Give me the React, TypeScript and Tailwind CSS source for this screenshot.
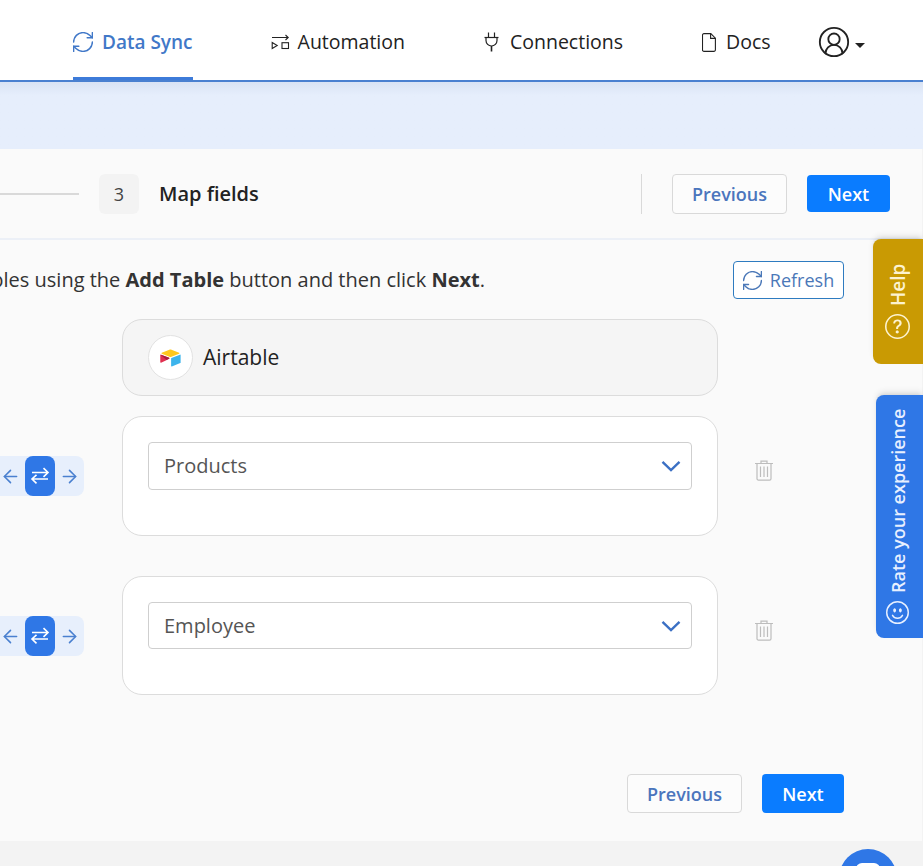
import React from "react";
import { BsQuestionCircle, BsEmojiSmile } from "react-icons/bs";
import { ArrowLeft, ArrowRight, CircleUserRound } from "lucide-react";

const font = { fontFamily: '"Open Sans", sans-serif' };

const SyncIcon = ({ size, className }: { size: number; className: string }) => (
  <svg width={size} height={size} viewBox="2.4 2.4 19.2 19.2" fill="none" stroke="currentColor" strokeWidth="1.4" strokeLinecap="round" strokeLinejoin="round" className={className}>
    <path d="M3 12a9 9 0 0 1 9-9 9.75 9.75 0 0 1 6.74 2.74L21 8" />
    <path d="M21 3v5h-5" />
    <path d="M21 12a9 9 0 0 1-9 9 9.75 9.75 0 0 1-6.74-2.74L3 16" />
    <path d="M8 16H3v5" />
  </svg>
);

const AutomationIcon = () => (
  <svg width="19" height="17" viewBox="0 0 19 17" fill="none" stroke="#222" strokeWidth="1.1" className="mr-2 -ml-px">
    <path d="M1 3.5h16M14.5 1l2.7 2.5L14.5 6" />
    <path d="M1.2 8.5v6l5-3z" />
    <rect x="11" y="8.7" width="6.5" height="5.8" />
  </svg>
);

const PlugIcon = () => (
  <svg width="15" height="20" viewBox="0 0 15 20" fill="none" stroke="#222" strokeWidth="1.2" className="mr-[11px]">
    <path d="M4.5 0.5v5M10.5 0.5v5" />
    <path d="M0.5 5.5h14" />
    <path d="M2 5.5v3a5.5 5.5 0 0 0 11 0v-3" />
    <path d="M7.5 14v5.5" strokeWidth="1.6" />
  </svg>
);

const DocIcon = () => (
  <svg width="14" height="19" viewBox="0 0 14 19" fill="none" stroke="#222" strokeWidth="1.1" className="mr-[10px]">
    <path d="M2 0.6h6.8l4.6 4.6V16.6a1.6 1.6 0 0 1-1.6 1.8H2a1.5 1.5 0 0 1-1.5-1.6V2.2A1.5 1.5 0 0 1 2 0.6z" />
    <path d="M8.6 0.8v4.6h4.6" />
  </svg>
);

const SwapIcon = () => (
  <svg width="20" height="18" viewBox="0 0 20 18" fill="none" stroke="white" strokeWidth="1.6">
    <path d="M2 5.5h16M13.5 1.2 18 5.5l-4.5 4.3" />
    <path d="M18 12H2M6.5 7.8 2 12l4.5 4.3" />
  </svg>
);

const TrashIcon = () => (
  <svg width="20" height="21" viewBox="0 0 20 21" fill="none" stroke="#bdbdbd" strokeWidth="1.2">
    <path d="M1 3.5h18M7 3.5V1.2h6v2.3" />
    <path d="M3 3.5v15.2a1.4 1.4 0 0 0 1.4 1.4h11.2a1.4 1.4 0 0 0 1.4-1.4V3.5" />
    <path d="M6.5 6.5v10.5M10 6.5v10.5M13.5 6.5v10.5" />
  </svg>
);

const Chevron = () => (
  <svg width="20" height="12" viewBox="0 0 20 12" fill="none" stroke="#3b70c4" strokeWidth="2.4">
    <path d="M1.5 1.8 10 10l8.5-8.2" />
  </svg>
);

const AirtableLogo = () => (
  <svg width="23" height="20" viewBox="0 0 200 170">
    <path fill="#FFC81E" d="M90.04 12.37 24.08 39.66c-3.67 1.52-3.63 6.73.06 8.19l66.24 26.27c5.82 2.31 12.3 2.31 18.12 0l66.23-26.27c3.69-1.46 3.73-6.67.06-8.19l-65.96-27.29c-6.02-2.49-12.78-2.49-18.79 0" />
    <path fill="#3DB4EC" d="M105.31 88.46v65.62c0 3.12 3.15 5.26 6.05 4.11l73.81-28.65c1.68-.67 2.79-2.3 2.79-4.11V59.81c0-3.12-3.15-5.26-6.05-4.11l-73.81 28.65c-1.68.67-2.79 2.3-2.79 4.11" />
    <path fill="#E03050" d="M88.08 91.85 66.17 102.42l-2.22 1.08-46.24 22.15c-2.93 1.41-6.67-.72-6.67-3.98V60.09c0-1.18.6-2.2 1.41-2.96.34-.34.72-.62 1.12-.84 1.11-.66 2.68-.84 4.02-.31l70.12 27.78c3.56 1.41 3.84 6.41.37 8.09" />
    <path fill="#A81E40" d="M88.08 91.85 66.17 102.42 12.45 57.13c.34-.34.72-.62 1.12-.84 1.11-.66 2.68-.84 4.02-.31l70.12 27.78c3.56 1.41 3.84 6.41.37 8.09" />
  </svg>
);

const NavItem = ({ icon, label, active, className }: { icon: React.ReactNode; label: string; active?: boolean; className: string }) => (
  <div className={`relative flex h-full items-center pt-1 ${className}`}>
    {icon}
    <span className={active ? "text-[19px] font-semibold text-[#4178c8]" : "text-[19.5px] font-medium text-[#222]"}>{label}</span>
    {active && <div className="absolute bottom-0 left-0 right-0 h-[3px] bg-[#3d7bd9]" />}
  </div>
);

const Previous = ({ className }: { className: string }) => (
  <button className={`w-[115px] rounded border border-[#d9d9d9] bg-[#fcfcfc] text-lg font-semibold text-[#4b75bd] ${className}`}>Previous</button>
);

const Next = ({ className }: { className: string }) => (
  <button className={`rounded bg-[#0a7cff] text-lg font-semibold text-white ${className}`}>Next</button>
);

const TableRow = ({ name, height, selectHeight, gap }: { name: string; height: string; selectHeight: string; gap: string }) => (
  <div className={`flex items-start ${gap}`}>
    <div className="mt-10 flex h-10 w-[84px] items-center rounded-r-lg bg-[#e7effc]">
      <ArrowLeft size={21} strokeWidth={1.8} className="text-[#4a80d0]" />
      <div className="ml-[4px] flex h-10 w-[30px] items-center justify-center rounded-lg bg-[#2f77e6]">
        <SwapIcon />
      </div>
      <ArrowRight size={21} strokeWidth={1.8} className="ml-1 text-[#4a80d0]" />
    </div>
    <div className={`ml-[38px] w-[596px] rounded-[20px] border border-[#dcdcdc] bg-white px-[25px] pt-[25px] ${height}`}>
      <div className={`flex items-center justify-between rounded border border-[#cfcfcf] bg-white pl-[15px] pr-[10px] ${selectHeight}`}>
        <span className="text-[20px] text-[#555]">{name}</span>
        <Chevron />
      </div>
    </div>
    <div className="ml-9 mt-[44px]">
      <TrashIcon />
    </div>
  </div>
);

export default function App() {
  return (
    <div className="relative flex h-[866px] w-[923px] flex-col overflow-hidden bg-[#f3f3f3]" style={font}>
      <header className="flex h-[82px] shrink-0 border-b-2 border-[#4a80d0] bg-white">
        <NavItem className="ml-[73px]" active label="Data Sync" icon={<SyncIcon size={20} className="mr-[9px] text-[#4178c8]" />} />
        <NavItem className="ml-[79px]" label="Automation" icon={<AutomationIcon />} />
        <NavItem className="ml-[79px]" label="Connections" icon={<PlugIcon />} />
        <NavItem className="ml-[79px]" label="Docs" icon={<DocIcon />} />
        <div className="ml-[46px] flex items-center pt-1">
          <CircleUserRound size={34} strokeWidth={1.3} className="text-[#222]" />
          <div className="ml-1 mt-[6px] h-0 w-0 border-x-[5px] border-t-[5px] border-x-transparent border-t-[#222]" />
        </div>
      </header>

      <div className="h-[67px] shrink-0 bg-gradient-to-b from-[#d9e3f4] from-0% to-[#e6eefc] to-20%" />

      <main className="flex h-[692px] w-[922px] shrink-0 flex-col bg-[#fafafa]">
        <div className="flex h-[91px] shrink-0 items-center border-b-2 border-[#ecf0f7] pr-8">
          <div className="h-[2px] w-[79px] bg-[#d9d9d9]" />
          <div className="ml-5 flex h-10 w-10 items-center justify-center rounded-md bg-[#f3f3f3] text-lg text-[#444]">3</div>
          <span className="ml-5 text-xl font-semibold text-[#222]">Map fields</span>
          <div className="ml-auto h-10 w-px bg-[#d9d9d9]" />
          <Previous className="ml-[30px] h-10" />
          <Next className="ml-5 h-[37px] w-[83px]" />
        </div>

        <div className="mt-[21px] flex h-[38px] shrink-0 items-center pr-[78px]">
          <div className="flex w-[485px] justify-end overflow-hidden whitespace-nowrap text-[20px] text-[#333]">
            <span className="shrink-0">Add your tables using the <b className="font-bold">Add Table</b> button and then click <b className="font-bold">Next</b>.</span>
          </div>
          <button className="ml-auto flex h-[38px] w-[111px] items-center justify-center gap-2 rounded border border-[#2e7bc0] bg-white text-lg text-[#4b78b8]">
            <SyncIcon size={19} className="" />
            Refresh
          </button>
        </div>

        <div className="ml-[122px] mt-5 flex h-[77px] w-[596px] shrink-0 items-center rounded-[20px] border border-[#dcdcdc] bg-[#f5f5f5] pl-[25px]">
          <div className="flex h-[45px] w-[45px] items-center justify-center rounded-full border border-[#e2e2e2] bg-white">
            <AirtableLogo />
          </div>
          <span className="ml-[10px] text-[21px] font-medium text-[#222]">Airtable</span>
        </div>

        <TableRow name="Products" height="h-[120px]" selectHeight="h-12" gap="mt-5" />
        <TableRow name="Employee" height="h-[119px]" selectHeight="h-[47px]" gap="mt-10" />

        <div className="mt-[79px] flex justify-end gap-5 pr-[78px]">
          <Previous className="h-[39px]" />
          <Next className="h-[39px] w-[82px]" />
        </div>
      </main>

      <div className="absolute right-0 top-[239px] flex h-[125px] w-[50px] rotate-180 items-center justify-center gap-2 rounded-r-lg bg-[#c99a03] text-[19px] font-semibold text-[#fdf3d0] shadow-md [writing-mode:vertical-rl]">
        <BsQuestionCircle className="rotate-180 text-[25px]" />
        <span>Help</span>
      </div>
      <div className="absolute right-0 top-[395px] flex h-[243px] w-[47px] rotate-180 items-center justify-center gap-2 rounded-r-lg bg-[#2f77e6] pl-1 text-lg font-semibold text-[#e8f0ff] shadow-md [writing-mode:vertical-rl]">
        <BsEmojiSmile className="rotate-180 text-[23px]" />
        <span>Rate your experience</span>
      </div>
      <div className="absolute left-[839px] top-[849px] h-[58px] w-[58px] rounded-full bg-[#2f77e6]">
        <div className="mx-auto mt-[14px] h-5 w-6 rounded-md bg-white" />
      </div>
    </div>
  );
}
